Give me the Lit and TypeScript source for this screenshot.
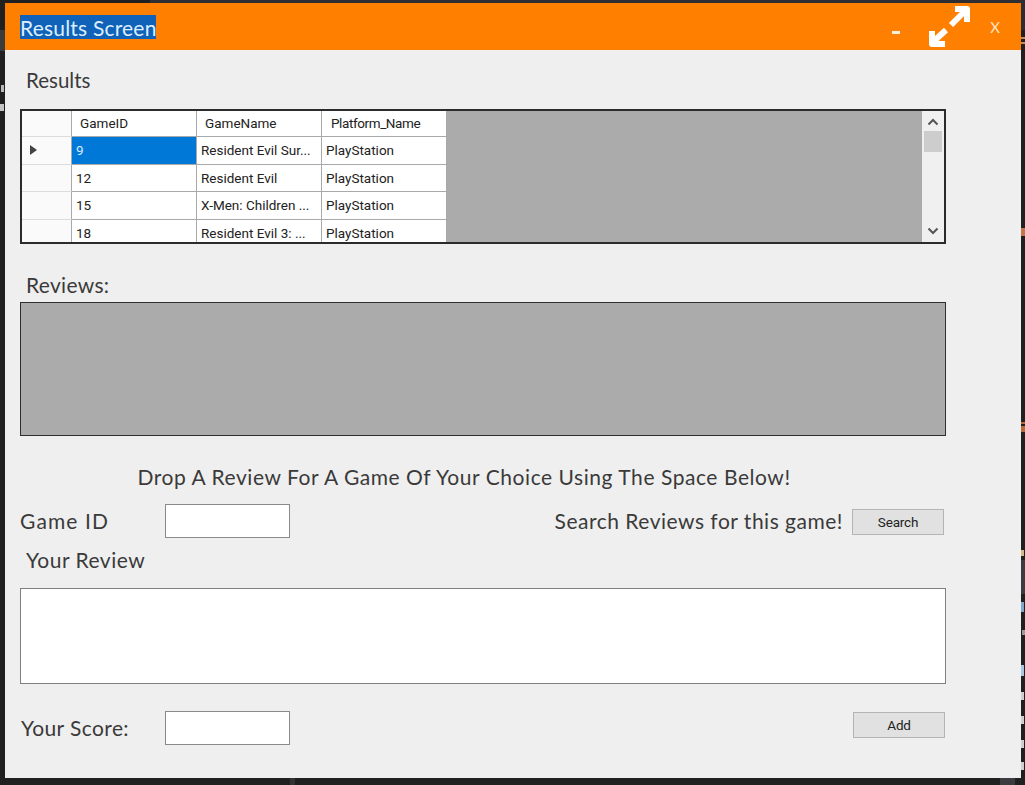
import { LitElement, html, css } from "lit";
import { customElement } from "lit/decorators.js";

const rows = [
  ["9", "Resident Evil Sur...", "PlayStation"],
  ["12", "Resident Evil", "PlayStation"],
  ["15", "X-Men: Children ...", "PlayStation"],
  ["18", "Resident Evil 3: ...", "PlayStation"],
];

// Fragments of the dark editor that shows around the window: [x, y, w, h, colour]
const marks: [number, number, number, number, string][] = [
  [150, 0, 875, 3, "#2e2e33"],
  [0, 30, 5, 21, "#3b3b3e"],
  [1, 85, 3, 7, "#b9b9b9"],
  [0, 104, 4, 7, "#c4c4c4"],
  [1021, 0, 4, 30, "#2c2c33"],
  [1021, 37, 4, 2, "#c98a55"],
  [1021, 42, 4, 2, "#c98a55"],
  [1021, 228, 4, 8, "#c4764a"],
  [1021, 422, 4, 2, "#b96a3c"],
  [1021, 426, 4, 6, "#b96a3c"],
  [1021, 550, 3, 6, "#d4b98f"],
  [1021, 560, 4, 34, "#3b3b40"],
  [1021, 602, 3, 10, "#7fa7c9"],
  [1022, 630, 3, 5, "#9a9a9a"],
  [1021, 665, 3, 11, "#a9c8e0"],
  [1021, 692, 3, 8, "#cfcfcf"],
  [1021, 716, 3, 8, "#cfcfcf"],
  [1021, 740, 3, 8, "#cfcfcf"],
  [1021, 762, 3, 8, "#cfcfcf"],
  [1000, 778, 15, 7, "#3c3c40"],
  [290, 778, 5, 7, "#333336"],
];

@customElement("app-root")
export class AppRoot extends LitElement {
  static styles = css`
    :host { display: block; width: 1025px; height: 785px; background: #202020; overflow: hidden; position: relative; font-family: "Lato", "Liberation Sans", sans-serif; color: #3a3a3a; }
    .mark { position: absolute; }
    .window { position: absolute; left: 5px; top: 3px; width: 1016px; height: 775px; background: #efefef; display: flex; flex-direction: column; }
    .title { height: 47px; flex: none; background: #ff8000; display: flex; align-items: flex-start; color: #fff; }
    .title-text { margin: 12px 0 0 15px; width: 136px; height: 24px; background: #0f62b8; color: #dceeff; font-size: 21px; line-height: 25px; white-space: nowrap; letter-spacing: 0.2px; }
    .winbtns { margin-left: auto; display: flex; align-items: flex-start; }
    .min { width: 8px; height: 3px; background: #ffeeda; margin: 28px 20px 0 0; }
    .exp { width: 50px; height: 47px; flex: none; margin-right: 15px; }
    .close { width: 20px; text-align: center; font-size: 15px; line-height: 18px; margin: 15px 16px 0 0; color: #ffe2c2; }
    .body { flex: 1; padding: 0 75px 0 15px; display: flex; flex-direction: column; }
    .label { font-size: 21px; line-height: 24px; white-space: nowrap; letter-spacing: 0.5px; }
    .tight { letter-spacing: 0; font-size: 20.5px; }
    .wide { letter-spacing: 1.1px; }
    .indent { margin-left: 6px; }
    .grid { box-sizing: border-box; width: 926px; height: 135px; border: 2px solid #2b2b2b; background: #ababab; display: flex; overflow: hidden; font-family: "Roboto", "Liberation Sans", sans-serif; font-size: 13.5px; color: #222; margin-top: 17px; }
    .cols { flex: 1; display: grid; grid-template-columns: 50px 125px 125px 125px 1fr; grid-template-rows: 26px 27.5px 27.5px 27.5px 27.5px; align-content: start; }
    .c { box-sizing: border-box; background: #fff; border-right: 1px solid #a9a9a9; border-bottom: 1px solid #a9a9a9; padding: 0 4px; line-height: 26px; white-space: nowrap; overflow: hidden; }
    .h { padding-left: 8px; line-height: 25px; }
    .plat { letter-spacing: -0.4px; padding-left: 9px; }
    .rh { background: #fafafa; border-bottom-color: #dcdcdc; display: flex; align-items: center; padding-left: 8px; }
    .sel { background: #0078d7; color: #d5ebff; }
    .void { background: none; border: none; grid-row: 1 / span 5; grid-column: 5; }
    .tri { width: 0; height: 0; border-left: 7px solid #444; border-top: 5px solid transparent; border-bottom: 5px solid transparent; }
    .sb { width: 22px; flex: none; background: #f0f0f0; display: flex; flex-direction: column; align-items: center; }
    .sb svg { flex: none; width: 12px; height: 8px; }
    .up { margin-top: 7px; }
    .thumb { width: 18px; height: 21px; background: #cdcdcd; margin-top: 5px; }
    .down { margin-top: auto; margin-bottom: 7px; }
    .reviews { box-sizing: border-box; width: 926px; height: 134px; background: #ababab; border: 1px solid #2e2e2e; margin-top: 5px; }
    .center { box-sizing: border-box; width: 926px; padding-right: 38px; text-align: center; margin-top: 29px; letter-spacing: 0.55px; }
    .row { display: flex; align-items: center; width: 926px; }
    .row.first { margin-top: 15px; }
    .row.last { margin-top: 27px; }
    .inp { box-sizing: border-box; width: 125px; height: 34px; background: #fff; border: 1px solid #8a8a8a; }
    .lab { width: 145px; flex: none; box-sizing: border-box; }
    .score { padding-left: 1px; letter-spacing: 0.4px; }
    .search { margin-left: auto; }
    .btn { box-sizing: border-box; width: 92px; height: 26px; background: #e1e1e1; border: 1px solid #b4b4b4; font-family: "Roboto", "Liberation Sans", sans-serif; font-size: 13.5px; letter-spacing: -0.2px; color: #222; display: flex; align-items: center; justify-content: center; }
    .btn-search { margin: 1px 2px 0 9px; }
    .btn-add { margin: -7px 1px 0 auto; }
    .text { box-sizing: border-box; width: 926px; height: 96px; background: #fff; border: 1px solid #7f7f7f; margin-top: 16px; }
    .h-results { margin-top: 18px; }
    .h-reviews { margin-top: 29px; letter-spacing: 0.3px; }
    .h-your { margin-top: 10px; }
  `;

  render() {
    return html`
      ${marks.map(
        ([x, y, w, h, c]) => html`<div class="mark" style="left:${x}px;top:${y}px;width:${w}px;height:${h}px;background:${c}"></div>`
      )}
      <div class="window">
        <div class="title">
          <div class="title-text">Results Screen</div>
          <div class="winbtns">
            <div class="min"></div>
            <svg class="exp" viewBox="0 0 50 47" fill="none" stroke="#fff" stroke-width="6" stroke-linejoin="round">
              <path d="M31 22 L45 8" />
              <path d="M35 6 H47 V19" />
              <path d="M26 27 L13 39" />
              <path d="M12 28 V41 H25" />
            </svg>
            <div class="close">X</div>
          </div>
        </div>
        <div class="body">
          <div class="label indent tight h-results">Results</div>
          <div class="grid">
            <div class="cols">
              <div class="c rh"></div>
              <div class="c h">GameID</div>
              <div class="c h">GameName</div>
              <div class="c h plat">Platform_Name</div>
              <div class="void"></div>
              ${rows.map((r, i) => html`
                <div class="c rh">${i === 0 ? html`<div class="tri"></div>` : ""}</div>
                <div class="c ${i === 0 ? "sel" : ""}">${r[0]}</div>
                <div class="c">${r[1]}</div>
                <div class="c">${r[2]}</div>
              `)}
            </div>
            <div class="sb">
              <svg class="up" viewBox="0 0 12 8" fill="none" stroke="#555" stroke-width="2"><path d="M1.5 6.5 L6 2 L10.5 6.5"/></svg>
              <div class="thumb"></div>
              <svg class="down" viewBox="0 0 12 8" fill="none" stroke="#555" stroke-width="2"><path d="M1.5 1.5 L6 6 L10.5 1.5"/></svg>
            </div>
          </div>
          <div class="label indent h-reviews">Reviews:</div>
          <div class="reviews"></div>
          <div class="label center">Drop A Review For A Game Of Your Choice Using The Space Below!</div>
          <div class="row first">
            <div class="label lab wide">Game ID</div>
            <div class="inp"></div>
            <div class="label search">Search Reviews for this game!</div>
            <div class="btn btn-search">Search</div>
          </div>
          <div class="label indent h-your">Your Review</div>
          <div class="text"></div>
          <div class="row last">
            <div class="label lab score">Your Score:</div>
            <div class="inp"></div>
            <div class="btn btn-add">Add</div>
          </div>
        </div>
      </div>
    `;
  }
}
